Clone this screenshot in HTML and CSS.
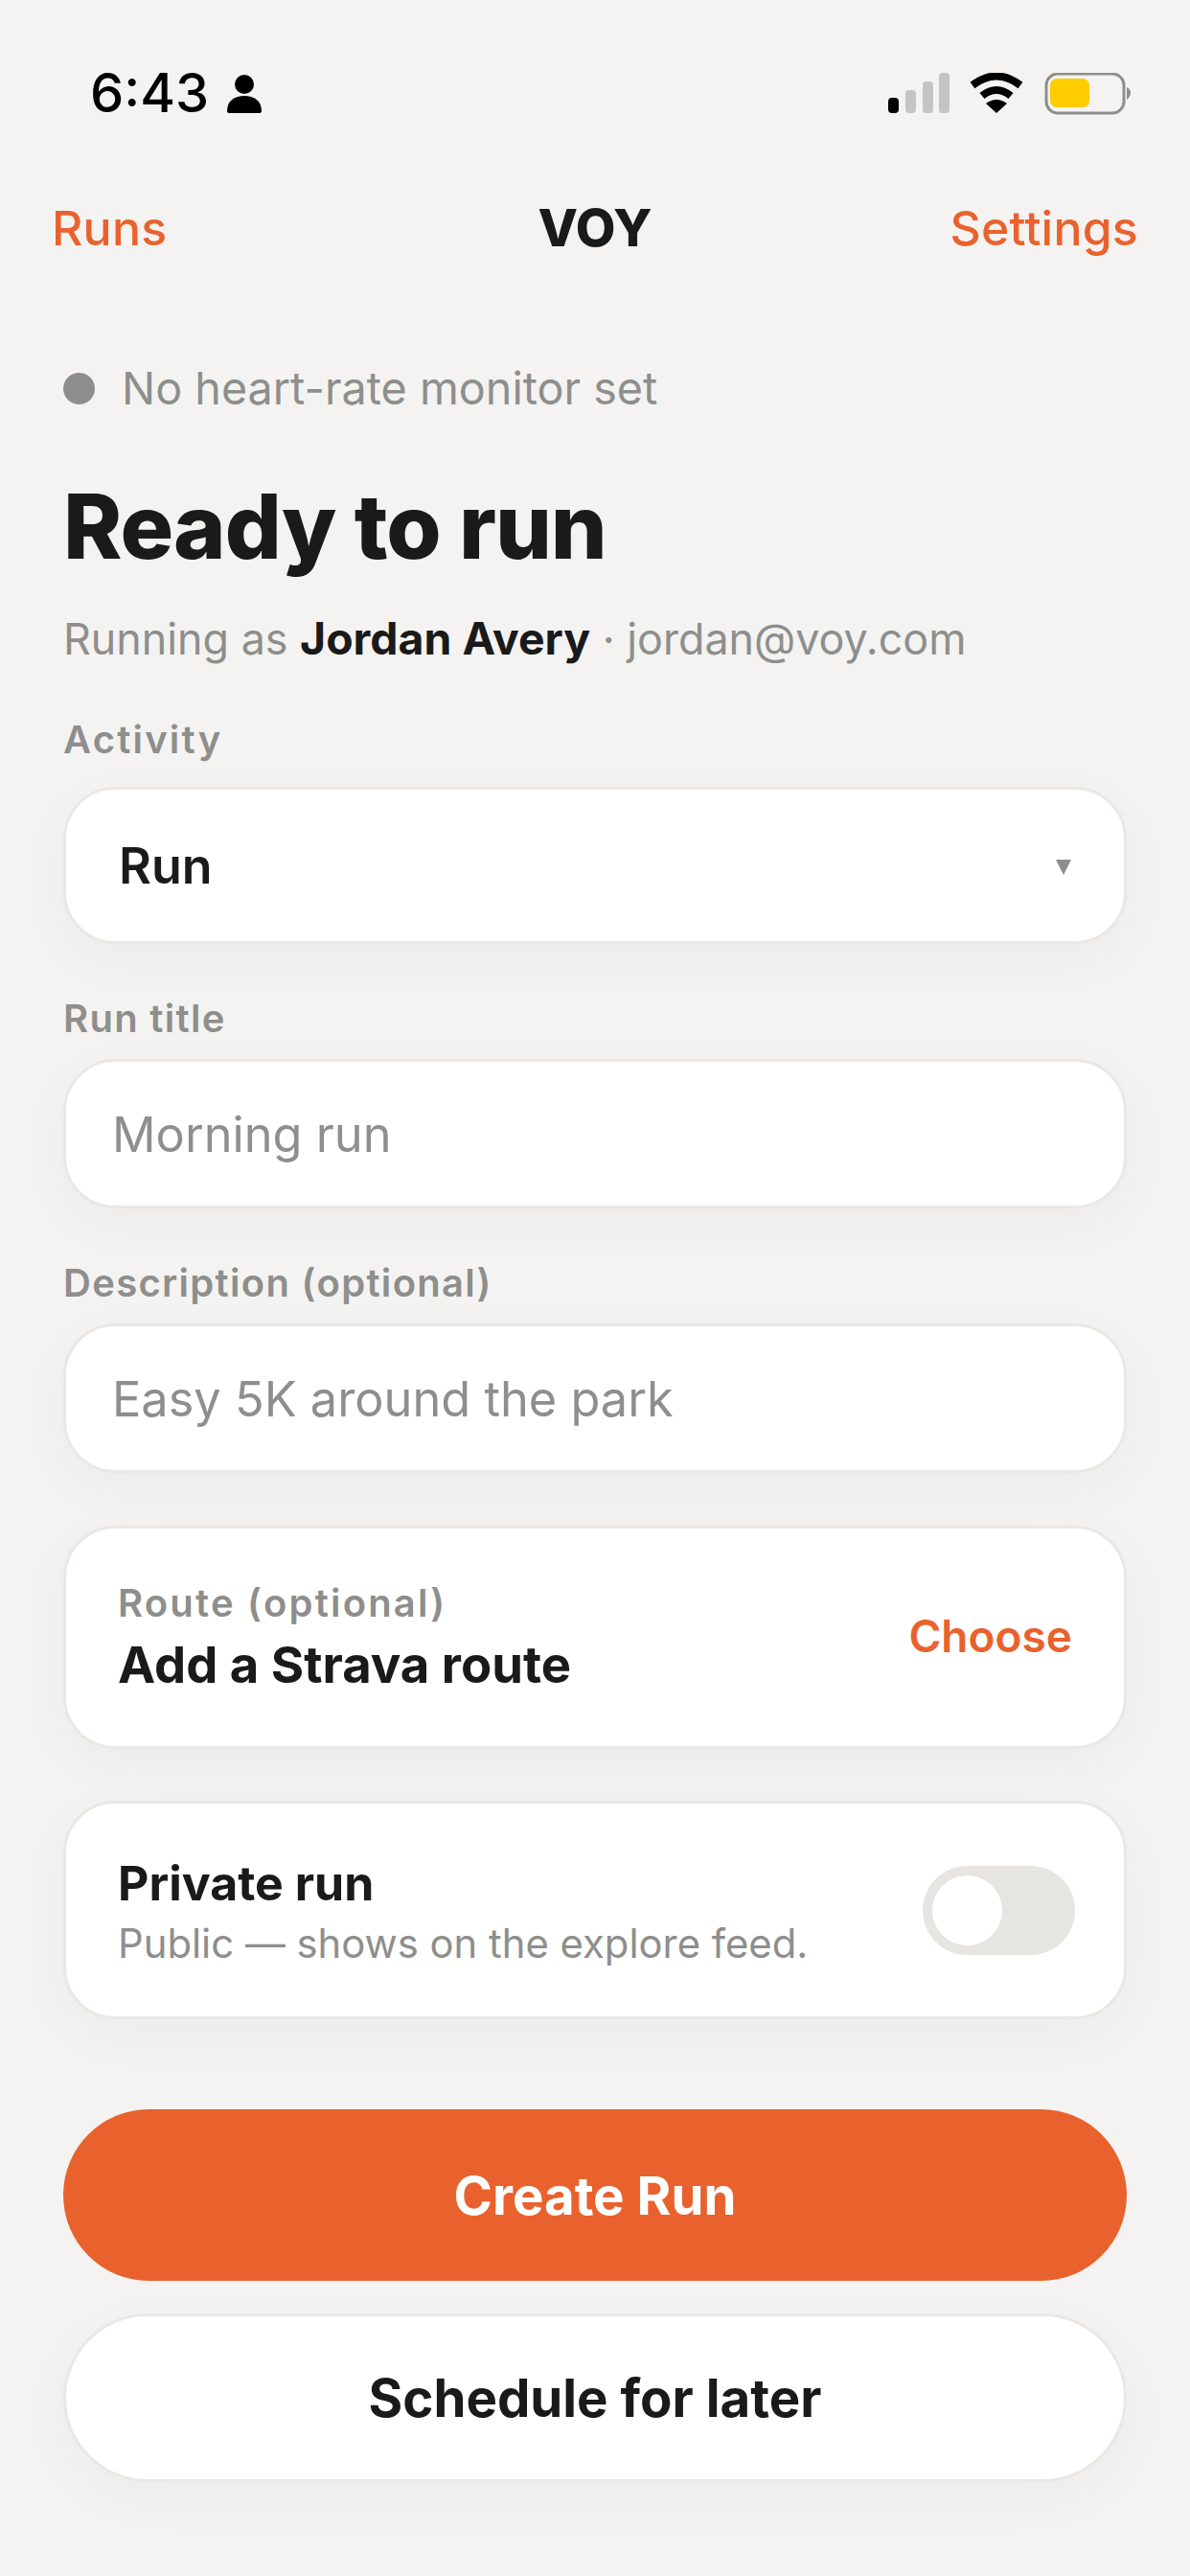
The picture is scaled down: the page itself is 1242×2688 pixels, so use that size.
FILE: index.html
```html
<!DOCTYPE html>
<html lang="en">
<head>
<meta charset="utf-8">
<title>VOY</title>
<link rel="stylesheet" href="styles.css">
</head>
<body>
<div class="screen">
  <header class="status">
    <div class="status-left">
      <span class="time">6:43</span>
      <svg class="person" width="38" height="40" viewBox="0 0 38 40"><circle cx="19" cy="10" r="10"/><path d="M1 38c0-11 8-16 18-16s18 5 18 16c0 1-1 2-2 2H3c-1 0-2-1-2-2z"/></svg>
    </div>
    <svg class="status-right" width="256" height="44" viewBox="0 0 256 44">
      <rect x="0" y="26" width="11" height="16" rx="4" fill="#000"/>
      <rect x="18" y="18" width="11" height="24" rx="4" fill="#c4c4c2"/>
      <rect x="36" y="9" width="11" height="33" rx="4" fill="#c4c4c2"/>
      <rect x="53" y="0" width="11" height="42" rx="4" fill="#c4c4c2"/>
      <path d="M88 13Q113-6 138 13M98 24Q113 12 128 24" fill="none" stroke="#000" stroke-width="8"/>
      <path d="M102 32Q113 24 124 32L113 42z" fill="#000"/>
      <rect x="165" y="1" width="81" height="41" rx="12" fill="none" stroke="#8e8e8c" stroke-width="3"/>
      <rect x="169" y="6" width="41" height="30" rx="7" fill="#ffcc00"/>
      <path d="M249 15c3 1 4 4 4 6s-1 5-4 7z" fill="#8e8e8c"/>
    </svg>
  </header>

  <nav class="nav">
    <a class="nav-link">Runs</a>
    <span class="brand">VOY</span>
    <a class="nav-link nav-link-end">Settings</a>
  </nav>

  <main class="content">
    <div class="monitor"><span class="dot"></span>No heart-rate monitor set</div>
    <h1 class="title">Ready to run</h1>
    <p class="identity">Running as <strong>Jordan Avery</strong> · jordan@voy.com</p>

    <label class="label label-activity">Activity</label>
    <div class="card select"><span class="select-value">Run</span><span class="caret"></span></div>

    <label class="label label-title">Run title</label>
    <div class="card input">Morning run</div>

    <label class="label label-desc">Description (optional)</label>
    <div class="card input">Easy 5K around the park</div>

    <div class="card row route">
      <div class="route-text">
        <div class="route-label">Route (optional)</div>
        <div class="route-title">Add a Strava route</div>
      </div>
      <a class="choose">Choose</a>
    </div>

    <div class="card row private">
      <div class="private-text">
        <div class="row-title">Private run</div>
        <div class="row-sub">Public — shows on the explore feed.</div>
      </div>
      <div class="toggle"><span class="knob"></span></div>
    </div>

    <button class="btn btn-primary">Create Run</button>
    <button class="btn btn-secondary">Schedule for later</button>
  </main>
</div>
</body>
</html>
```
FILE: styles.css
```css
* { box-sizing: border-box; }
html, body { margin: 0; padding: 0; }
body {
  width: 1242px;
  height: 2688px;
  overflow: hidden;
  background: #f4f3f1;
  color: #1a1a1a;
  font-family: Inter, "Liberation Sans", sans-serif;
}
.screen { display: flex; flex-direction: column; height: 100%; }

.status {
  display: flex;
  justify-content: space-between;
  align-items: center;
  height: 60px;
  margin-top: 67px;
  padding: 0 59px 0 94px;
}
.status-left { display: flex; align-items: center; gap: 18px; }
.time { font-size: 56px; line-height: 60px; font-weight: 500; color: #000; }
.person { fill: #000; margin-top: 2px; }
.status-right { display: block; margin-top: 1px; }

.nav {
  display: grid;
  grid-template-columns: 1fr auto 1fr;
  align-items: center;
  height: 80px;
  margin-top: 71px;
  padding: 0 54px;
}
.nav-link { font-size: 50px; font-weight: 500; letter-spacing: 0.2px; color: #e9622d; line-height: 80px; }
.nav-link-end { justify-self: end; }
.brand { font-size: 54px; font-weight: 800; line-height: 80px; }

.content { display: flex; flex-direction: column; padding: 0 66px; }

.monitor {
  display: flex;
  align-items: center;
  gap: 28px;
  height: 60px;
  margin-top: 97px;
  font-size: 46.7px;
  line-height: 60px;
  color: #8e8e8c;
}
.dot { width: 33px; height: 33px; border-radius: 50%; background: #8e8e8c; }

.title { margin: 64px 0 0; font-size: 92.8px; line-height: 100px; font-weight: 800; letter-spacing: -1px; }

.identity { margin: 37px 0 0; font-size: 44.8px; line-height: 60px; color: #8e8e8c; }
.identity strong { font-size: 46.4px; font-weight: 700; color: #1a1a1a; }

.label {
  display: block;
  font-size: 40px;
  line-height: 50px;
  font-weight: 600;
  letter-spacing: 1.3px;
  color: #8e8e8c;
}
.label-activity { margin-top: 50px; letter-spacing: 2.2px; }
.label-title { margin-top: 53px; }
.label-desc { margin-top: 53px; }

.card {
  background: #fff;
  border: 3px solid #e9e8e5;
  border-radius: 54px;
  box-shadow: 0 16px 56px rgba(0, 0, 0, 0.035);
}
.select {
  display: flex;
  justify-content: space-between;
  align-items: center;
  height: 164px;
  margin-top: 24px;
  padding: 0 55px;
  font-size: 52px;
  font-weight: 600;
}
.caret {
  width: 0;
  height: 0;
  margin-top: 3px;
  border-left: 8px solid transparent;
  border-right: 8px solid transparent;
  border-top: 16px solid #8e8e8c;
}
.input {
  display: flex;
  align-items: center;
  height: 156px;
  margin-top: 17px;
  padding: 0 48px;
  font-size: 50.5px;
  color: #8e8e8c;
}
.row { display: flex; justify-content: space-between; align-items: center; padding: 0 54px; }
.route { height: 233px; margin-top: 55px; }
.private { height: 228px; margin-top: 54px; padding-right: 51px; }
.route-label { margin-top: 2px; font-size: 40px; line-height: 46px; font-weight: 600; letter-spacing: 2.2px; color: #8e8e8c; }
.route-title { margin-top: 9px; font-size: 52.6px; line-height: 64px; font-weight: 700; }
.private-text { margin-top: 4px; }
.row-title { font-size: 50px; line-height: 60px; font-weight: 700; }
.row-sub { margin-top: 5px; font-size: 41.8px; line-height: 56px; color: #8e8e8c; }
.choose { margin-top: -4px; font-size: 46px; font-weight: 600; color: #e9622d; }
.toggle {
  display: flex;
  align-items: center;
  width: 159px;
  height: 93px;
  padding: 0 10px;
  border-radius: 47px;
  background: #e6e5e1;
}
.knob { width: 73px; height: 73px; border-radius: 50%; background: #fff; }

.btn {
  display: block;
  width: 100%;
  font-family: inherit;
  font-size: 54.6px;
  border-radius: 90px;
  cursor: pointer;
}
.btn-primary {
  height: 179px;
  margin-top: 94px;
  border: 0;
  background: #e9622d;
  color: #fff;
  font-weight: 700;
}
.btn-secondary {
  height: 176px;
  margin-top: 34px;
  border: 3px solid #e9e8e5;
  background: #fff;
  color: #1a1a1a;
  font-weight: 700;
  box-shadow: 0 16px 56px rgba(0, 0, 0, 0.035);
}
```
